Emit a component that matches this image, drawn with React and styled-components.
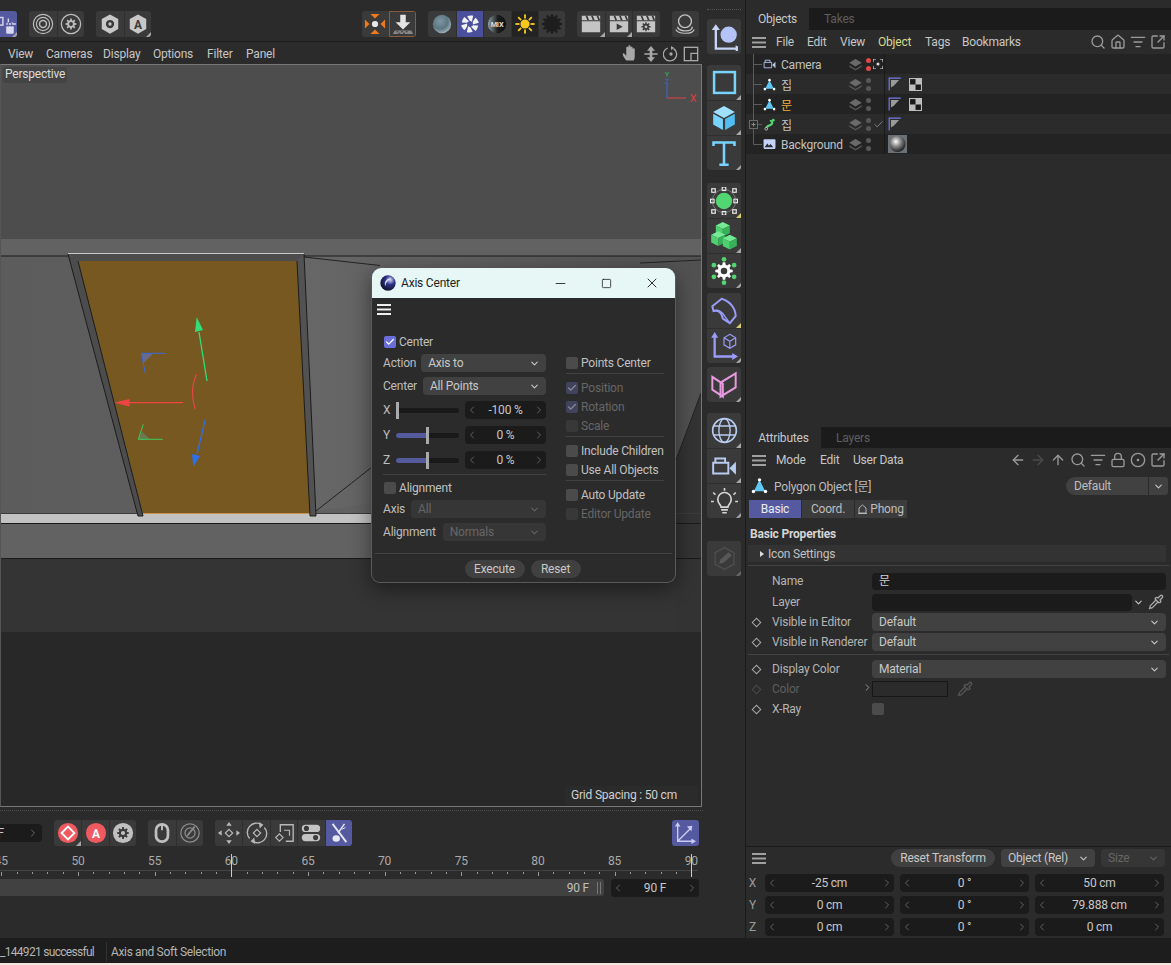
import React from "react";
import styled, { createGlobalStyle } from "styled-components";
import {
  Search,
  Home,
  ListFilter,
  SquareArrowOutUpRight,
  ArrowLeft,
  ArrowRight,
  ArrowUp,
  Lock,
  CircleDot,
  Pipette,
  X,
  Minus,
  Square,
  Check,
  ChevronDown,
  ChevronLeft,
  ChevronRight,
} from "lucide-react";

const GlobalStyle = createGlobalStyle`
  html, body {
    margin: 0;
    padding: 0;
    background: #2b2b2b;
    overflow: hidden;
  }
  * { box-sizing: border-box; }
  body {
    font-family: Roboto, "Noto Sans CJK KR", sans-serif;
    font-size: 12px;
    letter-spacing: -0.2px;
    color: #c6c6c6;
  }
`;

const Page = styled.div`
  width: 1171px;
  height: 965px;
  display: flex;
  flex-direction: column;
  overflow: hidden;
  background: #2b2b2b;
`;

const Main = styled.div`
  height: 938px;
  display: grid;
  grid-template-columns: 703px 42px 426px;
`;

const LeftColumn = styled.div`
  display: flex;
  flex-direction: column;
  min-width: 0;
  overflow: hidden;
`;

const Toolbar = styled.div`
  height: ${(p) => p.$height}px;
  padding: ${(p) => p.$top}px 4px 0 0;
  display: flex;
  align-items: flex-start;
  gap: 12px;
  flex-shrink: 0;
`;

const ToolSpacer = styled.div`
  flex: 1;
`;

const BtnGroup = styled.div`
  display: flex;
  border-radius: 3px;
  overflow: hidden;
  flex-shrink: 0;
  margin-left: ${(p) => p.$ml || 0}px;
`;

const ToolBtn = styled.div`
  position: relative;
  width: 27.4px;
  height: 26px;
  display: flex;
  align-items: center;
  justify-content: center;
  background: ${(p) => p.$bg || "#3a3a3a"};
  border-left: 1px solid #2f2f2f;
  outline: ${(p) => (p.$ring ? "1px solid #8a5a3a" : "none")};
  outline-offset: -1px;
  &:first-child { border-left: none; }
  &::after {
    content: "";
    display: ${(p) => (p.$corner ? "block" : "none")};
    position: absolute;
    right: 0;
    bottom: 0;
    border-style: solid;
    border-width: 0 0 5px 5px;
    border-color: transparent transparent #a8a8a8 transparent;
  }
`;

const ViewMenu = styled.div`
  height: 23px;
  display: flex;
  align-items: center;
  padding: 1px 4px 0 8px;
  border-top: 1px solid #1c1c1c;
  background: #2b2b2b;
`;

const MenuItem = styled.span`
  color: ${(p) => p.$color || "#c6c6c6"};
  width: ${(p) => p.$w}px;
  flex-shrink: 0;
  white-space: nowrap;
`;

const MenuIcons = styled.div`
  margin-left: auto;
  display: flex;
  align-items: center;
  gap: ${(p) => p.$gap || 5}px;
  color: ${(p) => p.$color || "#9a9a9a"};
`;

const Viewport = styled.div`
  position: relative;
  width: 702px;
  height: 743px;
  border: 1px solid #787878;
  border-left-color: #555;
  flex-shrink: 0;
`;

const Scene = styled.svg`
  display: block;
  width: 700px;
  height: 741px;
`;

const ViewLabel = styled.div`
  position: absolute;
  left: 2px;
  top: 2px;
  height: 16px;
  padding: 0 2px;
  line-height: 15px;
  border-radius: 2px;
  background: #444;
  color: #dcdcdc;
`;

const GridLabel = styled.div`
  position: absolute;
  right: 3px;
  bottom: 1px;
  width: 133px;
  height: 19px;
  line-height: 19px;
  padding-left: 6px;
  background: #2b2b2b;
  color: #d0d0d0;
`;

/* floating dialog */
const Dialog = styled.div`
  position: absolute;
  left: 370px;
  top: 203px;
  width: 305px;
  height: 315px;
  border: 1px solid #5a5a5a;
  border-top: none;
  border-radius: 9px;
  background: #2b2b2b;
  box-shadow: 0 6px 20px rgba(0, 0, 0, 0.45);
  display: flex;
  flex-direction: column;
`;

const TitleBar = styled.div`
  height: 30px;
  flex-shrink: 0;
  display: flex;
  align-items: center;
  padding-left: 8px;
  background: #e6f7f5;
  border-radius: 9px 9px 0 0;
  color: #1e1e1e;
`;

const TitleText = styled.span`
  margin-left: 5px;
  flex: 1;
`;

const WinButton = styled.div`
  width: 46px;
  height: 30px;
  display: flex;
  align-items: center;
  justify-content: center;
  color: #111;
`;

const DialogMenu = styled.div`
  height: 35px;
  padding: 6px 0 0 5px;
  flex-shrink: 0;
  color: #eee;
`;

const DialogBody = styled.div`
  height: 220px;
  padding-left: 11px;
  display: grid;
  grid-template-columns: 163px 98px;
  column-gap: 20px;
`;

const Col = styled.div`
  display: flex;
  flex-direction: column;
  padding-top: ${(p) => p.$top || 0}px;
`;

const FormRow = styled.div`
  height: 18px;
  display: flex;
  align-items: center;
  margin-top: ${(p) => p.$mt || 0}px;
  gap: ${(p) => p.$gap || 0}px;
`;

const FormLabel = styled.span`
  flex-shrink: 0;
  width: ${(p) => (p.$w ? `${p.$w}px` : "auto")};
  color: #bdbdbd;
`;

const Dropdown = styled.div`
  flex: 1;
  height: 18px;
  min-width: 0;
  padding: 0 6px 0 7px;
  border-radius: 4px;
  display: flex;
  align-items: center;
  justify-content: space-between;
  white-space: nowrap;
  background: ${(p) => (p.$off ? "#363636" : "#414141")};
  color: ${(p) => (p.$off ? "#666" : "#c8c8c8")};
`;

const Stepper = styled.div`
  flex: ${(p) => (p.$w ? "none" : 1)};
  width: ${(p) => (p.$w ? `${p.$w}px` : "auto")};
  height: 18px;
  border-radius: 4px;
  padding: 0 1px;
  display: flex;
  align-items: center;
  justify-content: space-between;
  background: #1b1b1b;
  color: #c8c8c8;
  svg { color: #777; flex-shrink: 0; }
`;

const Slider = styled.div`
  position: relative;
  width: 63px;
  height: 5px;
  margin: 0 6px 0 0;
  border-radius: 3px;
  background: #191919;
`;

const SliderFill = styled.div`
  height: 100%;
  width: ${(p) => p.$value}%;
  border-radius: 3px 0 0 3px;
  background: #555a9c;
`;

const SliderThumb = styled.div`
  position: absolute;
  top: -6px;
  left: ${(p) => p.$value}%;
  width: 3px;
  height: 17px;
  background: #aaa;
`;

const Divider = styled.div`
  height: 1px;
  flex-shrink: 0;
  margin: ${(p) => p.$mt || 0}px ${(p) => p.$mx || 0}px ${(p) => p.$mb || 0}px;
  background: ${(p) => p.$color || "#424242"};
`;

const CheckRow = styled.div`
  height: ${(p) => p.$h || 19}px;
  display: flex;
  align-items: center;
  gap: 3px;
  padding-left: ${(p) => p.$pl || 0}px;
  color: ${(p) => (p.$off ? "#666" : "#c0c0c0")};
`;

const CheckBox = styled.div`
  width: 12px;
  height: 12px;
  border-radius: 2px;
  display: flex;
  align-items: center;
  justify-content: center;
  flex-shrink: 0;
  background: ${(p) =>
    p.$on ? (p.$off ? "#41435c" : "#6a6ed8") : p.$off ? "#383838" : "#4b4b4b"};
  color: ${(p) => (p.$off ? "#8a8a9a" : "#fff")};
`;

const DialogFooter = styled.div`
  margin: 0 3px;
  padding: 6px 2px 0 0;
  border-top: 1px solid #424242;
  display: flex;
  justify-content: center;
  gap: 6px;
`;

const PillButton = styled.div`
  width: ${(p) => p.$w}px;
  height: 18px;
  line-height: 18px;
  text-align: center;
  border-radius: 9px;
  background: #404040;
  color: #c8c8c8;
  white-space: nowrap;
`;

/* timeline */
const DottedStrip = styled.div`
  height: 1px;
  margin: ${(p) => p.$top}px ${(p) => p.$x || 0}px 0;
  border-top: 1px dotted #4c4c4c;
  flex-shrink: 0;
`;

const FrameField = styled.div`
  width: 96px;
  height: 18px;
  margin: 4px 0 0 -54px;
  padding-right: 3px;
  border-radius: 4px;
  background: #1b1b1b;
  display: flex;
  align-items: center;
  justify-content: flex-end;
  gap: 23px;
  color: #c8c8c8;
  svg { color: #666; }
`;

const Ruler = styled.div`
  position: relative;
  height: 28px;
  margin-top: 4px;
  flex-shrink: 0;
`;

const RulerLabel = styled.span`
  position: absolute;
  top: 3px;
  transform: translateX(-50%);
  color: #aaa;
`;

const RulerTicks = styled.svg`
  position: absolute;
  left: 0;
  top: 0;
  width: 703px;
  height: 28px;
`;

const ScrubRow = styled.div`
  display: flex;
  gap: 7px;
  padding-right: 4px;
`;

const ScrubBar = styled.div`
  flex: 1;
  height: 17px;
  border-radius: 0 3px 3px 0;
  background: #414141;
  display: flex;
  align-items: center;
  justify-content: flex-end;
  padding-right: 3px;
  gap: 8px;
  color: #c0c0c0;
`;

const ScrubGrip = styled.div`
  width: 4px;
  height: 12px;
  border-left: 1px solid #777;
  border-right: 1px solid #777;
`;

/* command palette */
const Palette = styled.div`
  display: flex;
  flex-direction: column;
  padding-left: 4px;
`;

const PaletteGrip = styled.div`
  width: 34px;
  height: 1px;
  margin-top: 9px;
  border-top: 1px dotted #555;
`;

const PaletteGroup = styled.div`
  width: 34px;
  margin-top: ${(p) => p.$mt}px;
  border-radius: 3px;
  overflow: hidden;
  display: flex;
  flex-direction: column;
`;

const PaletteBtn = styled.div`
  position: relative;
  height: 35px;
  display: flex;
  align-items: center;
  justify-content: center;
  background: #3a3a3a;
  border-top: 1px solid #2f2f2f;
  &:first-child { border-top: none; }
  &::after {
    content: "";
    display: ${(p) => (p.$corner ? "block" : "none")};
    position: absolute;
    right: 0;
    bottom: 0;
    border-style: solid;
    border-width: 0 0 5px 5px;
    border-color: transparent transparent ${(p) => p.$corner} transparent;
  }
`;

/* right panels */
const RightColumn = styled.div`
  display: flex;
  flex-direction: column;
  border-left: 1px solid #1a1a1a;
  min-width: 0;
`;

const ObjectsPanel = styled.div`
  height: 417px;
  margin-top: 8px;
  flex-shrink: 0;
  display: flex;
  flex-direction: column;
`;

const AttributesPanel = styled.div`
  height: 421px;
  padding-top: 2px;
  flex-shrink: 0;
  display: flex;
  flex-direction: column;
`;

const CoordPanel = styled.div`
  flex: 1;
  border-top: 1px solid #1a1a1a;
  padding-top: 2px;
`;

const TabBar = styled.div`
  height: ${(p) => p.$h}px;
  display: flex;
  background: #1b1b1b;
  flex-shrink: 0;
`;

const Tab = styled.div`
  width: ${(p) => p.$w}px;
  line-height: 23px;
  text-align: ${(p) => (p.$active ? "center" : "left")};
  padding-left: ${(p) => (p.$active ? 0 : 15)}px;
  background: ${(p) => (p.$active ? "#2b2b2b" : "transparent")};
  color: ${(p) => (p.$active ? "#c8c8c8" : "#5e5e5e")};
`;

const PanelMenu = styled.div`
  height: 24px;
  padding: 0 5px 0 6px;
  display: flex;
  align-items: center;
  flex-shrink: 0;
  color: #b0b0b0;
`;

const MenuIconSlot = styled.span`
  margin-right: 10px;
  display: flex;
`;

const TreeRow = styled.div`
  height: 20px;
  display: grid;
  grid-template-columns: 139px 1fr;
  background: ${(p) => (p.$odd ? "#232323" : "#2b2b2b")};
`;

const TreeCell = styled.div`
  display: flex;
  align-items: center;
  padding-left: 1px;
  border-right: 1px solid #1a1a1a;
`;

const TreeIcon = styled.div`
  width: 13px;
  display: flex;
  justify-content: center;
  flex-shrink: 0;
`;

const TreeName = styled.span`
  margin-left: 5px;
  padding-top: ${(p) => p.$pt || 0}px;
  flex: 1;
  color: ${(p) => p.$color || "#c0c0c0"};
  white-space: nowrap;
`;

const TreeFlags = styled.div`
  display: flex;
  align-items: center;
  width: 36px;
  flex-shrink: 0;
  gap: 2px;
`;

const DotPair = styled.div`
  display: flex;
  flex-direction: column;
  gap: 3px;
  margin-left: 1px;
`;

const Dot = styled.div`
  width: 5px;
  height: 5px;
  border-radius: 50%;
  background: ${(p) => (p.$red ? "#e04848" : "#585858")};
`;

const TagCell = styled.div`
  display: flex;
  align-items: center;
  gap: 7px;
  padding-left: 3px;
`;

const ObjectHead = styled.div`
  height: 22px;
  margin-top: 2px;
  padding: 0 3px 0 5px;
  display: flex;
  align-items: center;
  gap: 6px;
  flex-shrink: 0;
  color: #bdbdbd;
`;

const SplitSelect = styled.div`
  margin: 2px 0 0 auto;
  width: 102px;
  height: 18px;
  display: grid;
  grid-template-columns: 1fr 19px;
  gap: 1px;
  border-radius: 9px 3px 3px 9px;
  overflow: hidden;
`;

const SplitPart = styled.div`
  background: #414141;
  padding-left: ${(p) => p.$pl || 0}px;
  line-height: 18px;
  display: flex;
  align-items: center;
  justify-content: ${(p) => (p.$pl ? "flex-start" : "center")};
`;

const AttrTabs = styled.div`
  display: flex;
  gap: 1px;
  margin: 4px 0 0 3px;
  flex-shrink: 0;
`;

const AttrTab = styled.div`
  width: 52px;
  height: 18px;
  display: flex;
  align-items: center;
  justify-content: center;
  gap: 3px;
  background: ${(p) => (p.$active ? "#5459a0" : "#3c3c3c")};
  color: ${(p) => (p.$active ? "#eee" : "#bdbdbd")};
`;

const SectionTitle = styled.div`
  height: 18px;
  margin-top: 7px;
  padding-left: 4px;
  line-height: 18px;
  font-weight: 700;
  color: #d4d4d4;
`;

const SectionBand = styled.div`
  height: 17px;
  margin: 2px 5px 0 2px;
  padding-left: 12px;
  display: flex;
  align-items: center;
  gap: 4px;
  background: #333;
  color: #c0c0c0;
`;

const Caret = styled.div`
  border-style: solid;
  border-width: 3.5px 0 3.5px 4px;
  border-color: transparent transparent transparent #ddd;
`;

const AttrRows = styled.div`
  display: flex;
  flex-direction: column;
  padding-top: 2px;
`;

const AttrRow = styled.div`
  height: 20px;
  margin-top: ${(p) => p.$mt || 0}px;
  padding-right: 5px;
  display: grid;
  grid-template-columns: 26px 100px 1fr;
  align-items: center;
  white-space: nowrap;
  color: ${(p) => (p.$off ? "#5e5e5e" : "#b4b4b4")};
`;

const Keyframe = styled.div`
  width: 7px;
  height: 7px;
  margin-left: 7px;
  transform: rotate(45deg);
  border: 1px solid ${(p) => (p.$off ? "#4a4a4a" : "#a8a8a8")};
`;

const DarkField = styled.div`
  height: ${(p) => p.$h || 17}px;
  border-radius: 4px;
  padding-left: 7px;
  line-height: 17px;
  background: #1b1b1b;
  color: #d0d0d0;
`;

const LayerControl = styled.div`
  display: grid;
  grid-template-columns: 1fr 14px 18px;
  align-items: center;
  gap: 1px;
  color: #aaa;
`;

const ColorControl = styled.div`
  position: relative;
  display: flex;
  align-items: center;
  gap: 9px;
  color: #555;
`;

const ColorArrow = styled.div`
  position: absolute;
  left: -10px;
  top: 1px;
  color: #999;
`;

const ColorSwatch = styled.div`
  width: 76px;
  height: 16px;
  background: #2b2b2b;
  border: 1px solid #171717;
`;

const CoordBar = styled.div`
  height: 18px;
  padding: 0 6px 0 6px;
  display: flex;
  align-items: center;
  color: #aaa;
`;

const CoordTools = styled.div`
  margin-left: auto;
  display: flex;
  gap: 6px;
`;

const FixedSelect = styled.div`
  width: ${(p) => p.$w}px;
  display: flex;
`;

const CoordGrid = styled.div`
  margin-top: 7px;
  display: flex;
  flex-direction: column;
  gap: 4px;
`;

const CoordRow = styled.div`
  display: grid;
  grid-template-columns: 13px repeat(3, 129px);
  column-gap: 6px;
  align-items: center;
  color: #9a9a9a;
  text-align: center;
`;

const StatusBar = styled.div`
  height: 25px;
  padding-top: 2px;
  flex-shrink: 0;
  display: flex;
  align-items: center;
  background: #1d1d1d;
  color: #b4b4b4;
`;

const StatusCell = styled.div`
  width: ${(p) => p.$w || "auto"};
  padding-left: ${(p) => p.$pl || 0}px;
  line-height: 20px;
  white-space: nowrap;
  letter-spacing: ${(p) => p.$ls || 0}px;
  border-right: ${(p) => (p.$split ? "1px solid #333" : "none")};
`;

const WindowEdge = styled.div`
  height: 2px;
  flex-shrink: 0;
  background: #efe7de;
`;

/* ---- drawn icons ---- */

const Svg = ({ s = 22, v = 24, children }) => (
  <svg width={s} height={s} viewBox={`0 0 ${v} ${v}`} fill="none">
    {children}
  </svg>
);

const gearPath = (cx, cy, r1, r2, n) => {
  let d = "";
  const step = (Math.PI * 2) / n;
  for (let i = 0; i < n; i++) {
    const a = i * step;
    const pts = [
      [r2, a - step * 0.18],
      [r2, a + step * 0.18],
      [r1, a + step * 0.32],
      [r1, a + step * 0.68],
    ];
    pts.forEach(([r, t], j) => {
      const x = (cx + Math.cos(t) * r).toFixed(2);
      const y = (cy + Math.sin(t) * r).toFixed(2);
      d += `${i === 0 && j === 0 ? "M" : "L"}${x} ${y} `;
    });
  }
  return d + "Z";
};

const Hamburger = ({ color = "#a0a0a0" }) => (
  <svg width="14" height="11" viewBox="0 0 14 11">
    <rect y="0" width="14" height="2" fill={color} />
    <rect y="4.5" width="14" height="2" fill={color} />
    <rect y="9" width="14" height="2" fill={color} />
  </svg>
);

const Chevron = ({ c = "#ccc" }) => <ChevronDown size={11} color={c} strokeWidth={2.2} />;

const HEX = "M12 1.5 21 6.5V17.5L12 22.5 3 17.5V6.5Z";

const SelectIcon = () => (
  <Svg s={26}>
    <rect x="1" y="6" width="10" height="7" stroke="#d8d8f0" strokeWidth="1.3" />
    <path d="M16 7v4h4M14 12h9" stroke="#d8d8f0" strokeWidth="1.3" />
    <rect x="14" y="14" width="7" height="7" rx="1" fill="#d8d8f0" />
    <path d="M16 14v-2a1.5 1.5 0 0 1 3 0v2" stroke="#5459a0" strokeWidth="1" />
  </Svg>
);

const Target = () => (
  <Svg>
    <circle cx="12" cy="12" r="10.5" stroke="#bcbcbc" strokeWidth="1.3" />
    <circle cx="12" cy="12" r="7.2" stroke="#bcbcbc" strokeWidth="1.3" />
    <circle cx="12" cy="12" r="3.8" stroke="#bcbcbc" strokeWidth="1.6" />
  </Svg>
);

const GearRing = () => (
  <Svg>
    <circle cx="12" cy="12" r="10.5" stroke="#bcbcbc" strokeWidth="1.4" />
    <path d={gearPath(12, 12, 4.2, 6, 8)} fill="#bcbcbc" />
    <circle cx="12" cy="12" r="2.1" fill="#3a3a3a" />
  </Svg>
);

const HexEye = () => (
  <Svg>
    <path d={HEX} fill="#c8c8c8" />
    <circle cx="12" cy="12" r="4.5" fill="#3a3a3a" />
    <circle cx="12" cy="12" r="1.8" fill="#c8c8c8" />
  </Svg>
);

const HexA = () => (
  <Svg>
    <path d={HEX} fill="#c8c8c8" />
    <text x="12" y="17" textAnchor="middle" fontSize="13" fontWeight="700" fontFamily="Roboto" fill="#3a3a3a">
      A
    </text>
  </Svg>
);

const SnapArrows = () => (
  <Svg>
    <circle cx="12" cy="12" r="3.4" fill="#e8e8e8" />
    <path
      d="M7 1h10l-5 5ZM7 23h10l-5-5ZM1 7v10l5-5ZM23 7v10l-5-5Z"
      fill="#f07a1a"
    />
  </Svg>
);

const DropArrow = () => (
  <Svg>
    <path d="M9 2h6v8h5l-8 8-8-8h5Z" fill="#e4e4e4" />
    <path d="M3 19h18l2 4H1Z" fill="#888" />
    <path d="M5 20h2v1H5ZM10 20h2v1h-2ZM15 20h2v1h-2ZM7 21.500h2v1H7ZM12 21.500h2v1h-2Z" fill="#333" />
  </Svg>
);

const GlassBall = () => (
  <Svg>
    <defs>
      <radialGradient id="ball" cx="40%" cy="35%" r="70%">
        <stop offset="0" stopColor="#7c98a4" />
        <stop offset="0.6" stopColor="#5d7682" />
        <stop offset="1" stopColor="#a8b8c0" />
      </radialGradient>
    </defs>
    <circle cx="12" cy="12" r="10" fill="url(#ball)" />
  </Svg>
);

const Shutter = () => (
  <Svg>
    {[0, 60, 120, 180, 240, 300].map((a) => (
      <path
        key={a}
        d="M9 3.500C11 2.500 13.500 2.500 15.500 3L14 9.500 11.500 8.200Z"
        fill="#f2f2f2"
        transform={`rotate(${a} 12 12)`}
      />
    ))}
  </Svg>
);

const MixBall = () => (
  <Svg>
    <defs>
      <linearGradient id="mix" x1="0" y1="0" x2="1" y2="0">
        <stop offset="0" stopColor="#8aa0a8" />
        <stop offset="0.55" stopColor="#1c1c1c" />
        <stop offset="1" stopColor="#111" />
      </linearGradient>
    </defs>
    <circle cx="12" cy="12" r="10" fill="url(#mix)" />
    <text x="12" y="15" textAnchor="middle" fontSize="8" fontWeight="700" fontFamily="Roboto" fill="#ddd">
      MIX
    </text>
  </Svg>
);

const Sun = () => (
  <Svg>
    <circle cx="12" cy="12" r="5" fill="#f6c81e" />
    {[0, 45, 90, 135, 180, 225, 270, 315].map((a) => (
      <rect key={a} x="11" y="1.500" width="2" height="4.500" fill="#f6c81e" transform={`rotate(${a} 12 12)`} />
    ))}
  </Svg>
);

const DarkGear = () => (
  <Svg>
    <path d={gearPath(12, 12, 8.5, 11, 12)} fill="#1e1e1e" />
  </Svg>
);

const Clapper = ({ mark }) => (
  <Svg>
    <path d="M2 3h20v5H2Z" fill="#c4c4c4" />
    <path d="M6 3h2l2 5H8ZM12 3h2l2 5h-2ZM18 3h2l2 5h-2Z" fill="#3a3a3a" />
    <path d="M2 9h20v12H2Z" fill="#c4c4c4" />
    {mark === "play" && <path d="M9.500 11.500 16 15l-6.500 3.500Z" fill="#3a3a3a" />}
    {mark === "gear" && (
      <>
        <path d={gearPath(12, 15, 3.4, 5, 8)} fill="#3a3a3a" />
        <circle cx="12" cy="15" r="1.500" fill="#c4c4c4" />
      </>
    )}
  </Svg>
);

const HeadRing = () => (
  <Svg>
    <circle cx="12" cy="9" r="7" stroke="#c0c0c0" strokeWidth="1.5" />
    <path d="M4 15c-.5 5 15.500 7 16 0" stroke="#c0c0c0" strokeWidth="1.5" />
    <path d="M2 18c2 5 18 6 20 0" stroke="#c0c0c0" strokeWidth="1.2" />
  </Svg>
);

const RedDiamond = () => (
  <Svg>
    <circle cx="12" cy="12" r="11" fill="#ee5a5f" />
    <path d="M12 5l7 7-7 7-7-7Z" stroke="#fff" strokeWidth="2" />
  </Svg>
);

const RedA = () => (
  <Svg>
    <circle cx="12" cy="12" r="11" fill="#ee5a5f" />
    <text x="12" y="17" textAnchor="middle" fontSize="13" fontWeight="700" fontFamily="Roboto" fill="#fff">
      A
    </text>
  </Svg>
);

const GrayGear = () => (
  <Svg>
    <circle cx="12" cy="12" r="11" fill="#c0c0c0" />
    <path d={gearPath(12, 12, 4.6, 6.500, 8)} fill="#3a3a3a" />
    <circle cx="12" cy="12" r="2.300" fill="#c0c0c0" />
  </Svg>
);

const MouseIcon = () => (
  <Svg>
    <rect x="4" y="1" width="16" height="22" rx="8" fill="#c0c0c0" />
    <rect x="7" y="4" width="10" height="16" rx="5" fill="#3a3a3a" />
    <rect x="11" y="3" width="2" height="6" fill="#c0c0c0" />
  </Svg>
);

const GaugeIcon = () => (
  <Svg>
    <circle cx="12" cy="12" r="10" stroke="#8a8a8a" strokeWidth="1.400" />
    <circle cx="12" cy="12" r="5.500" stroke="#8a8a8a" strokeWidth="1.400" />
    <path d="M9 15 17 5" stroke="#8a8a8a" strokeWidth="2" />
  </Svg>
);

const MoveKey = () => (
  <Svg>
    <path d="M12 8l4 4-4 4-4-4Z" stroke="#b8b8b8" strokeWidth="1.300" />
    <path d="M12 0l3 4H9ZM12 24l3-4H9ZM0 12l4-3v6ZM24 12l-4-3v6Z" fill="#b8b8b8" />
  </Svg>
);

const RotateKey = () => (
  <Svg>
    <path d="M12 8l4 4-4 4-4-4Z" stroke="#b8b8b8" strokeWidth="1.300" />
    <path d="M4 18A10 10 0 0 1 17 3M20 6A10 10 0 0 1 7 21" stroke="#b8b8b8" strokeWidth="1.500" />
    <path d="M14 0l5 3-4 4ZM10 24l-5-3 4-4Z" fill="#b8b8b8" />
  </Svg>
);

const ScaleKey = () => (
  <Svg>
    <path d="M8 11V3h14v18h-8" stroke="#b8b8b8" strokeWidth="1.500" />
    <path d="M7 13l4 4-4 4-4-4Z" stroke="#b8b8b8" strokeWidth="1.300" />
    <path d="M12 9h6v6" stroke="#b8b8b8" strokeWidth="1.300" />
  </Svg>
);

const Toggles = () => (
  <Svg>
    <rect x="2" y="3" width="20" height="8" rx="4" fill="#c4c4c4" />
    <circle cx="7" cy="7" r="2.800" fill="#3a3a3a" />
    <rect x="2" y="13" width="20" height="8" rx="4" fill="#c4c4c4" />
    <circle cx="17" cy="17" r="2.800" fill="#3a3a3a" />
  </Svg>
);

const CrossedKey = () => (
  <Svg>
    <path d="M5 2 20 22" stroke="#e8e8f4" strokeWidth="2" />
    <path d="M18 2 11 12" stroke="#e8e8f4" strokeWidth="1.500" />
    <ellipse cx="9" cy="18" rx="4" ry="3.500" fill="#e8e8f4" />
    <path d="M15 8l4-2" stroke="#e8e8f4" strokeWidth="1" />
  </Svg>
);

const BlueAxes = () => (
  <Svg>
    <path d="M4 3v18h18M4 21 18 7" stroke="#c8ccf0" strokeWidth="1.500" />
    <path d="M4 0l3 5H1ZM24 21l-5-3v6ZM20 4l-1 6-5-5Z" fill="#c8ccf0" />
  </Svg>
);

/* palette icons */
const AxisBall = () => (
  <Svg s={28}>
    <path d="M5 4v18h19" stroke="#c8d4f8" strokeWidth="2" />
    <path d="M5 1 1.500 6h7ZM27 22l-5-3v6Z" fill="#c8d4f8" />
    <circle cx="16" cy="10" r="7" fill="#b4c4f8" />
  </Svg>
);

const RectIcon = () => (
  <Svg s={25}>
    <rect x="2" y="2" width="20" height="20" stroke="#76d4ff" strokeWidth="2.400" />
  </Svg>
);

const CubeIcon = () => (
  <Svg s={26}>
    <path d="M12 1 22 6.500 12 12 2 6.500Z" fill="#9fe0ff" />
    <path d="M2 8 11 13v10L2 18Z" fill="#76d4ff" />
    <path d="M22 8 13 13v10l9-5Z" fill="#52bdf0" />
  </Svg>
);

const TextIcon = () => (
  <Svg s={28}>
    <path d="M3 6V3h18v3M12 3v19M8 22h8" stroke="#76d4ff" strokeWidth="2.200" />
  </Svg>
);

const SubdivIcon = () => (
  <Svg s={28}>
    <circle cx="12" cy="12" r="7" fill="#52d672" />
    {[[3, 3], [12, 1.500], [21, 3], [2, 12], [22, 12], [3, 21], [12, 22.500], [21, 21]].map(([x, y]) => (
      <rect key={`${x}-${y}`} x={x - 1.500} y={y - 1.500} width="3" height="3" stroke="#eee" strokeWidth="1" />
    ))}
    <circle cx="12" cy="12" r="10" stroke="#aaa" strokeWidth="0.500" />
  </Svg>
);

const IsoCube = ({ x, y, r }) => (
  <>
    <path d={`M${x} ${y - r}l${r} ${r / 2}-${r} ${r / 2}-${r}-${r / 2}Z`} fill="#74ea94" />
    <path d={`M${x - r} ${y - r / 2}l${r} ${r / 2}v${r * 1.1}l-${r}-${r / 2}Z`} fill="#4fd070" />
    <path d={`M${x + r} ${y - r / 2}l-${r} ${r / 2}v${r * 1.1}l${r}-${r / 2}Z`} fill="#38b058" />
  </>
);

const GreenCubes = () => (
  <Svg s={28}>
    <IsoCube x={11} y={6} r={6} />
    <IsoCube x={7} y={14} r={6} />
    <IsoCube x={17} y={17} r={6} />
  </Svg>
);

const GearDots = () => (
  <Svg s={28}>
    <path d={gearPath(12, 12, 5.500, 7.500, 8)} fill="#fff" />
    <circle cx="12" cy="12" r="2.800" fill="#3a3a3a" />
    {[0, 60, 120, 180, 240, 300].map((a) => (
      <circle
        key={a}
        cx={12 + Math.sin((a * Math.PI) / 180) * 10}
        cy={12 - Math.cos((a * Math.PI) / 180) * 10}
        r="2"
        fill="#52d672"
      />
    ))}
  </Svg>
);

const BendIcon = () => (
  <Svg s={28}>
    <path d="M2 8 10 1.500c7 2 12 8 12 15l-5 6-6-4C10 13 7 11 3 12Z" stroke="#9a9cf8" strokeWidth="1.700" />
    <path d="M3 12c4-2 8 1 10 5l4 5.500" stroke="#9a9cf8" strokeWidth="1.200" />
  </Svg>
);

const AxisCube = () => (
  <Svg s={28}>
    <path d="M4 3v18h18" stroke="#9a9cf8" strokeWidth="2" />
    <path d="M4 0 1 5h6ZM24 21l-5-3v6Z" fill="#9a9cf8" />
    <path d="M17 2l5 3v6l-5 3-5-3V5ZM12 5l5 3 5-3M17 8v6" stroke="#9a9cf8" strokeWidth="1" />
  </Svg>
);

const WingIcon = () => (
  <Svg s={28}>
    <path d="M2 5l9 6v11l-9-6ZM22 2l-13 8v12l13-8Z" stroke="#e89ae0" strokeWidth="1.700" />
  </Svg>
);

const GlobeIcon = () => (
  <Svg s={27}>
    <circle cx="12" cy="12" r="10.500" stroke="#b8ccf0" strokeWidth="1.500" />
    <ellipse cx="12" cy="12" rx="5" ry="10.500" stroke="#b8ccf0" strokeWidth="1.200" />
    <path d="M2 8h20M2 16h20" stroke="#b8ccf0" strokeWidth="1.200" />
  </Svg>
);

const CameraIcon = ({ s = 26, w = 1.800 }) => (
  <Svg s={s}>
    <path d="M2 9h14v10H2ZM4 9V5h9v4" stroke="#b8ccf0" strokeWidth={w} />
    <path d="M23 8v12l-6-6Z" fill="#b8ccf0" />
  </Svg>
);

const BulbIcon = () => (
  <Svg s={27}>
    <path d="M9 17c0-2-3-3-3-7a6 6 0 0 1 12 0c0 4-3 5-3 7ZM9 19.500h6M10 22h4" stroke="#d4d4d4" strokeWidth="1.500" />
    <path d="M12 0v2.500M2 4l2 2M22 4l-2 2M0 12h2.500M24 12h-2.500" stroke="#d4d4d4" strokeWidth="1.500" />
  </Svg>
);

const PencilHex = () => (
  <Svg s={25}>
    <path d={HEX} stroke="#4e4e4e" strokeWidth="1.300" />
    <path d="M7 17l1-4 8-7 3 3-8 7Z" fill="#585858" />
  </Svg>
);

/* object manager icons */
const PolyIcon = ({ s = 15 }) => (
  <Svg s={s}>
    <path d="M12 4 20 20H4Z" fill="#5fc8f4" />
    <circle cx="12" cy="4" r="2.400" fill="#fff" />
    <circle cx="3.500" cy="20.500" r="2.400" fill="#fff" />
    <circle cx="20.500" cy="20.500" r="2.400" fill="#fff" />
  </Svg>
);

const SplineIcon = () => (
  <Svg s={15}>
    <path d="M6 19c0-5 11-5 11-10 0-3-2-4-4-3" stroke="#52d672" strokeWidth="4" />
    <circle cx="6" cy="20" r="2.500" fill="#2b2b2b" stroke="#ddd" strokeWidth="1.300" />
    <circle cx="19" cy="4" r="2.500" fill="#52d672" />
  </Svg>
);

const PictureIcon = () => (
  <Svg s={14}>
    <rect x="1" y="3" width="22" height="18" rx="2" fill="#c4d4f8" />
    <path d="M3 18l5-7 3 4 3-3 5 6Z" fill="#2b2b2b" />
  </Svg>
);

const LayerStack = () => (
  <Svg s={15}>
    <path d="M12 3 22 9l-10 6L2 9Z" fill="#6a6a6a" />
    <path d="M2 13l10 6 10-6v2.500l-10 6-10-6Z" fill="#5a5a5a" />
  </Svg>
);

const Connector = ({ last, plus }) => (
  <svg width="16" height="20" viewBox="0 0 16 20" style={{ flexShrink: 0 }}>
    <path d={`M6.500 0V${last ? 10.500 : 20}M6.500 10.500H15`} stroke="#5c5c5c" fill="none" />
    {plus && (
      <>
        <rect x="2.500" y="6.500" width="8" height="8" fill="#2b2b2b" stroke="#6a6a6a" />
        <path d="M4.500 10.500h4M6.500 8.500v4" stroke="#888" />
      </>
    )}
  </svg>
);

const FlagTag = () => (
  <Svg s={14}>
    <path d="M2 23V2h20" stroke="#7b7be8" strokeWidth="2" />
    <path d="M5 5h14L10 15l-5 3Z" fill="#9a9a9a" />
  </Svg>
);

const CheckerTag = () => (
  <svg width="13" height="13" viewBox="0 0 12 12">
    <rect width="12" height="12" fill="#bdbdbd" />
    <rect x="1" y="1" width="5" height="5" fill="#1a1a1a" />
    <rect x="6" y="6" width="5" height="5" fill="#1a1a1a" />
  </svg>
);

const MaterialTag = () => (
  <svg width="19" height="18" viewBox="0 0 19 18">
    <defs>
      <radialGradient id="mat" cx="40%" cy="35%" r="65%">
        <stop offset="0" stopColor="#fff" />
        <stop offset="0.45" stopColor="#8c8c8c" />
        <stop offset="1" stopColor="#222" />
      </radialGradient>
    </defs>
    <rect width="19" height="18" fill="#6a7278" />
    <circle cx="9.500" cy="9" r="8" fill="url(#mat)" />
  </svg>
);

const FocusMark = () => (
  <svg width="10" height="10" viewBox="0 0 10 10">
    <path d="M0 3V0h3M7 0h3v3M10 7v3H7M3 10H0V7" stroke="#ddd" fill="none" strokeWidth="1.200" />
    <circle cx="5" cy="5" r="1.500" fill="#ddd" />
  </svg>
);

const HandIcon = () => (
  <Svg s={17}>
    <path
      d="M6 22c-2-3-5-7-5-9s2-2 3 0l2 2V4c0-2 3-2 3 0V2c0-2 3-2 3 0v2c0-2 3-2 3 0v2c0-2 3-2 3 0v10c0 3-1 6-2 6Z"
      fill="#a8a8a8"
    />
  </Svg>
);

const VMove = () => (
  <Svg s={16}>
    <path d="M12 0l6 7h-4v4h8v2h-8v4h4l-6 7-6-7h4v-4H2v-2h8V7H6Z" fill="#a8a8a8" />
  </Svg>
);

const OrbitIcon = () => (
  <Svg s={16}>
    <path d="M16 4A10 10 0 1 1 7 3" stroke="#a8a8a8" strokeWidth="2" />
    <path d="M12 0v6l5-3Z" fill="#a8a8a8" />
    <circle cx="12" cy="12" r="2.500" fill="#a8a8a8" />
  </Svg>
);

const PanelsIcon = () => (
  <Svg s={16}>
    <rect x="2" y="2" width="20" height="20" stroke="#a8a8a8" strokeWidth="2" />
    <path d="M12 22V11h10" stroke="#a8a8a8" strokeWidth="2" />
  </Svg>
);

const C4dLogo = () => (
  <svg width="16" height="16" viewBox="0 0 24 24">
    <defs>
      <radialGradient id="c4d" cx="65%" cy="30%" r="80%">
        <stop offset="0" stopColor="#cfd4ff" />
        <stop offset="0.4" stopColor="#2a2f80" />
        <stop offset="1" stopColor="#0c0c20" />
      </radialGradient>
    </defs>
    <circle cx="12" cy="12" r="11.500" fill="url(#c4d)" />
    <path d="M17 5c-6-1-12 5-9 12 1-6 4-9 9-12Z" fill="#fff" opacity="0.75" />
  </svg>
);

const HouseTab = () => (
  <svg width="9" height="10" viewBox="0 0 9 10" fill="none">
    <path d="M1 9V4l3.500-3L8 4v5ZM0 9.500h9" stroke="#bdbdbd" strokeWidth="0.900" />
  </svg>
);

/* ---- data ---- */

const PALETTE = [
  { mt: 9, items: [[AxisBall]] },
  { mt: 11, items: [[RectIcon, "#a8a8a8"], [CubeIcon, "#a8a8a8"], [TextIcon, "#a8a8a8"]] },
  { mt: 13, items: [[SubdivIcon, "#d8d070"], [GreenCubes, "#a8a8a8"], [GearDots, "#a8a8a8"]] },
  { mt: 5, items: [[BendIcon, "#d8d070"], [AxisCube, "#a8a8a8"]] },
  { mt: 4, items: [[WingIcon, "#a8a8a8"]] },
  { mt: 11, items: [[GlobeIcon, "#a8a8a8"], [CameraIcon, "#a8a8a8"], [BulbIcon, "#a8a8a8"]] },
  { mt: 23, items: [[PencilHex, "#6a6a6a"]] },
];

const TREE = [
  { name: "Camera", pt: 2, icon: <CameraIcon s={14} w={1.600} />, dots: [true, true], extra: <FocusMark /> },
  { name: "집", icon: <PolyIcon />, tags: [<FlagTag key="f" />, <CheckerTag key="c" />] },
  { name: "문", color: "#f0b23c", icon: <PolyIcon />, tags: [<FlagTag key="f" />, <CheckerTag key="c" />] },
  { name: "집", icon: <SplineIcon />, plus: true, extra: <Check size={11} color="#888" />, tags: [<FlagTag key="f" />] },
  { name: "Background", pt: 2, icon: <PictureIcon />, last: true, tags: [<MaterialTag key="m" />] },
];

const COORDS = [
  ["X", "-25 cm", "0 °", "50 cm"],
  ["Y", "0 cm", "0 °", "79.888 cm"],
  ["Z", "0 cm", "0 °", "0 cm"],
];

const frameX = (f) => 78 + (f - 50) * 15.33;
const FRAMES = Array.from({ length: 50 }, (_, i) => 45 + i);
const LABELS = [45, 50, 55, 60, 65, 70, 75, 80, 85, 90];

/* ---- small composed parts ---- */

const Value = ({ children, w }) => (
  <Stepper $w={w}>
    <ChevronLeft size={12} strokeWidth={1.500} />
    <span>{children}</span>
    <ChevronRight size={12} strokeWidth={1.500} />
  </Stepper>
);

const Select = ({ children, off }) => (
  <Dropdown $off={off}>
    {children}
    <Chevron c={off ? "#666" : "#ccc"} />
  </Dropdown>
);

const Option = ({ label, on, off }) => (
  <CheckRow $off={off}>
    <CheckBox $on={on} $off={off}>
      {on && <Check size={10} strokeWidth={3} />}
    </CheckBox>
    {label}
  </CheckRow>
);

const SliderRow = ({ label, value, pct, mt }) => (
  <FormRow $mt={mt}>
    <FormLabel $w={13}>{label}</FormLabel>
    <Slider>
      <SliderFill $value={pct} />
      <SliderThumb $value={pct} />
    </Slider>
    <Value>{value}</Value>
  </FormRow>
);

const SceneDrawing = () => (
  <Scene viewBox="1 65 700 741">
    <defs>
      <linearGradient id="wallL" x1="0" y1="0" x2="1" y2="0">
        <stop offset="0" stopColor="#5c5c5c" />
        <stop offset="1" stopColor="#666" />
      </linearGradient>
      <linearGradient id="wallR" x1="0" y1="0" x2="1" y2="0">
        <stop offset="0" stopColor="#676767" />
        <stop offset="1" stopColor="#515151" />
      </linearGradient>
    </defs>
    <rect x="1" y="65" width="700" height="174" fill="#4d4d4d" />
    <rect x="1" y="239" width="700" height="17" fill="#626262" />
    <rect x="1" y="256" width="700" height="258" fill="url(#wallL)" />
    <path d="M304 256 701 256V393L676 460 316 511Z" fill="url(#wallR)" />
    <rect x="1" y="514" width="700" height="9" fill="#c2c2c2" />
    <rect x="1" y="524" width="700" height="34" fill="#626262" />
    <rect x="1" y="559" width="700" height="73" fill="#343434" />
    <rect x="1" y="632" width="700" height="175" fill="#282828" />
    <path d="M676 460 701 393V632H676Z" fill="#333" />
    <path d="M1 256H68M304 256H701M1 523.500H701M1 558.500H701" stroke="#1a1a1a" strokeWidth="1" />
    <path d="M1 513.500H143M316 513.500H701" stroke="#3c3c3c" strokeWidth="1" />
    <path d="M304 257 380 265.500M640 263 701 260M316 511 372 467M676 460 701 393" stroke="#222" fill="none" strokeWidth="1" />

    {/* door */}
    <path d="M78 261H297L310 513H143Z" fill="#775821" />
    <path d="M143 513.500H310" stroke="#c8914c" strokeWidth="1.200" />
    <path d="M68 254H304L297 261H78Z" fill="#4c4c4c" />
    <path d="M68 254 78 261 143 516H138Z" fill="#4c4c4c" />
    <path d="M304 254 297 261 310 516H316Z" fill="#525252" />
    <path d="M68 253.500H304" stroke="#c8c8c8" strokeWidth="1.200" />
    <path d="M68 254 138 516H143L78 261M304 254 316 516H310L297 261" stroke="#1c1c1c" fill="none" strokeWidth="1" />

    {/* gizmo */}
    <path d="M207 381 199 332" stroke="#2fe07a" strokeWidth="1.300" />
    <path d="M196.700 317 195 332 203 330Z" fill="#2fe07a" />
    <path d="M183 402.700H129" stroke="#ee4444" strokeWidth="1.300" />
    <path d="M114 402.700 129.500 399V406.500Z" fill="#ee4444" />
    <path d="M205.300 419.300 197 454" stroke="#2c6fe8" strokeWidth="1.300" />
    <path d="M193.300 467 192 454 200 456Z" fill="#2c6fe8" />
    <path d="M196.700 374Q189 390 195.300 409.300" stroke="#e04444" strokeWidth="1.200" fill="none" />
    <path d="M141.300 353.300H153.300L143.300 363.300Z" fill="#6a6a8a" />
    <path d="M165.700 353.300H141.300L145.300 373.300" stroke="#3a6ad8" strokeWidth="1" fill="none" />
    <path d="M138.300 439.300H150L142 431.700Z" fill="#6a7a50" />
    <path d="M162.700 439.300H138.300L143.300 424.300" stroke="#3ecc5a" strokeWidth="1" fill="none" />

    {/* world axis */}
    <path d="M667 98H686" stroke="#e04444" strokeWidth="1" />
    <path d="M667 98V84" stroke="#3a6ad8" strokeWidth="1" />
    <text x="693" y="102" textAnchor="middle" fontSize="11" fontFamily="Roboto" fill="#d84040">X</text>
    <text x="667" y="77" textAnchor="middle" fontSize="7" fontFamily="Roboto" fill="#30b860">Y</text>
    <text x="667" y="84" textAnchor="middle" fontSize="7" fontFamily="Roboto" fill="#3a6ad8">Z</text>
  </Scene>
);

export default function App() {
  return (
    <Page>
      <GlobalStyle />
      <Main>
        <LeftColumn>
          <Toolbar $height={41} $top={11}>
            <BtnGroup $ml={-10}>
              <ToolBtn $bg="#5459a0" $corner>
                <SelectIcon />
              </ToolBtn>
            </BtnGroup>
            <BtnGroup>
              <ToolBtn><Target /></ToolBtn>
              <ToolBtn><GearRing /></ToolBtn>
            </BtnGroup>
            <BtnGroup>
              <ToolBtn><HexEye /></ToolBtn>
              <ToolBtn $corner><HexA /></ToolBtn>
            </BtnGroup>
            <ToolSpacer />
            <BtnGroup>
              <ToolBtn><SnapArrows /></ToolBtn>
              <ToolBtn $ring><DropArrow /></ToolBtn>
            </BtnGroup>
            <BtnGroup>
              <ToolBtn><GlassBall /></ToolBtn>
              <ToolBtn $bg="#4a4f9c"><Shutter /></ToolBtn>
              <ToolBtn><MixBall /></ToolBtn>
              <ToolBtn $bg="#232323"><Sun /></ToolBtn>
              <ToolBtn><DarkGear /></ToolBtn>
            </BtnGroup>
            <BtnGroup>
              <ToolBtn $corner><Clapper /></ToolBtn>
              <ToolBtn $corner><Clapper mark="play" /></ToolBtn>
              <ToolBtn><Clapper mark="gear" /></ToolBtn>
            </BtnGroup>
            <BtnGroup>
              <ToolBtn><HeadRing /></ToolBtn>
            </BtnGroup>
          </Toolbar>

          <ViewMenu>
            <MenuItem $w={38}>View</MenuItem>
            <MenuItem $w={57}>Cameras</MenuItem>
            <MenuItem $w={50}>Display</MenuItem>
            <MenuItem $w={54}>Options</MenuItem>
            <MenuItem $w={39}>Filter</MenuItem>
            <MenuItem $w={30}>Panel</MenuItem>
            <MenuIcons $gap={4}>
              <HandIcon />
              <VMove />
              <OrbitIcon />
              <PanelsIcon />
            </MenuIcons>
          </ViewMenu>

          <Viewport>
            <SceneDrawing />
            <ViewLabel>Perspective</ViewLabel>
            <GridLabel>Grid Spacing : 50 cm</GridLabel>

            <Dialog>
              <TitleBar>
                <C4dLogo />
                <TitleText>Axis Center</TitleText>
                <WinButton><Minus size={15} strokeWidth={1.300} /></WinButton>
                <WinButton><Square size={11} strokeWidth={1.600} /></WinButton>
                <WinButton><X size={16} strokeWidth={1.300} /></WinButton>
              </TitleBar>
              <DialogMenu>
                <Hamburger color="#eee" />
              </DialogMenu>
              <DialogBody>
                <Col>
                  <CheckRow $pl={1} $h={18}>
                    <CheckBox $on><Check size={10} strokeWidth={3} /></CheckBox>
                    Center
                  </CheckRow>
                  <FormRow $mt={3} $gap={5}>
                    <FormLabel>Action</FormLabel>
                    <Select>Axis to</Select>
                  </FormRow>
                  <FormRow $mt={5} $gap={6}>
                    <FormLabel>Center</FormLabel>
                    <Select>All Points</Select>
                  </FormRow>
                  <SliderRow label="X" value="-100 %" pct={0} mt={6} />
                  <SliderRow label="Y" value="0 %" pct={47} mt={7} />
                  <SliderRow label="Z" value="0 %" pct={47} mt={7} />
                  <Divider $mt={5} $mb={4} />
                  <CheckRow $pl={1} $h={18}>
                    <CheckBox />
                    Alignment
                  </CheckRow>
                  <FormRow $mt={3} $gap={6}>
                    <FormLabel>Axis</FormLabel>
                    <Select off>All</Select>
                  </FormRow>
                  <FormRow $mt={5} $gap={7}>
                    <FormLabel>Alignment</FormLabel>
                    <Select off>Normals</Select>
                  </FormRow>
                </Col>
                <Col $top={20}>
                  <Option label="Points Center" />
                  <Divider $mt={1} $mb={4} />
                  <Option label="Position" on off />
                  <Option label="Rotation" on off />
                  <Option label="Scale" off />
                  <Divider $mt={1} $mb={4} />
                  <Option label="Include Children" />
                  <Option label="Use All Objects" />
                  <Divider $mt={1} $mb={4} />
                  <Option label="Auto Update" />
                  <Option label="Editor Update" off />
                </Col>
              </DialogBody>
              <DialogFooter>
                <PillButton $w={60}>Execute</PillButton>
                <PillButton $w={50}>Reset</PillButton>
              </DialogFooter>
            </Dialog>
          </Viewport>

          <DottedStrip $top={3} />
          <Toolbar $height={36} $top={9}>
            <FrameField>
              F
              <ChevronRight size={12} />
            </FrameField>
            <BtnGroup>
              <ToolBtn $corner><RedDiamond /></ToolBtn>
              <ToolBtn><RedA /></ToolBtn>
              <ToolBtn><GrayGear /></ToolBtn>
            </BtnGroup>
            <BtnGroup>
              <ToolBtn><MouseIcon /></ToolBtn>
              <ToolBtn><GaugeIcon /></ToolBtn>
            </BtnGroup>
            <BtnGroup>
              <ToolBtn><MoveKey /></ToolBtn>
              <ToolBtn><RotateKey /></ToolBtn>
              <ToolBtn><ScaleKey /></ToolBtn>
              <ToolBtn><Toggles /></ToolBtn>
              <ToolBtn $bg="#5459a0"><CrossedKey /></ToolBtn>
            </BtnGroup>
            <ToolSpacer />
            <BtnGroup>
              <ToolBtn $bg="#5459a0"><BlueAxes /></ToolBtn>
            </BtnGroup>
          </Toolbar>

          <Ruler>
            {LABELS.map((f) => (
              <RulerLabel key={f} style={{ left: frameX(f) }}>
                {f}
              </RulerLabel>
            ))}
            <RulerTicks viewBox="0 0 703 28">
              <path d="M0 19.500H698" stroke="#444" />
              {FRAMES.map((f) => (
                <path
                  key={f}
                  d={`M${Math.round(frameX(f)) + 0.5} 21V${f % 5 === 0 ? 25 : 23}`}
                  stroke="#999"
                />
              ))}
              <path d={`M${Math.round(frameX(60)) + 0.5} 3V26`} stroke="#ccc" />
              <path d={`M${Math.round(frameX(90)) + 0.5} 3V26`} stroke="#ccc" />
            </RulerTicks>
          </Ruler>

          <ScrubRow>
            <ScrubBar>
              90 F
              <ScrubGrip />
            </ScrubBar>
            <Value w={88}>90 F</Value>
          </ScrubRow>
        </LeftColumn>

        <Palette>
          <PaletteGrip />
          {PALETTE.map((group, g) => (
            <PaletteGroup key={g} $mt={group.mt}>
              {group.items.map(([Icon, corner], i) => (
                <PaletteBtn key={i} $corner={corner}>
                  <Icon />
                </PaletteBtn>
              ))}
            </PaletteGroup>
          ))}
        </Palette>

        <RightColumn>
          <ObjectsPanel>
            <TabBar $h={22}>
              <Tab $w={63} $active>Objects</Tab>
              <Tab $w={70}>Takes</Tab>
            </TabBar>
            <PanelMenu>
              <MenuIconSlot><Hamburger /></MenuIconSlot>
              <MenuItem $w={31}>File</MenuItem>
              <MenuItem $w={33}>Edit</MenuItem>
              <MenuItem $w={38}>View</MenuItem>
              <MenuItem $w={47} $color="#d9d98c">Object</MenuItem>
              <MenuItem $w={37}>Tags</MenuItem>
              <MenuItem $w={60}>Bookmarks</MenuItem>
              <MenuIcons $gap={4}>
                <Search size={16} />
                <Home size={16} />
                <ListFilter size={16} />
                <SquareArrowOutUpRight size={16} />
              </MenuIcons>
            </PanelMenu>
            {TREE.map((row, i) => (
              <TreeRow key={i} $odd={i % 2 === 0}>
                <TreeCell>
                  <Connector last={row.last} plus={row.plus} />
                  <TreeIcon>{row.icon}</TreeIcon>
                  <TreeName $color={row.color} $pt={row.pt}>{row.name}</TreeName>
                  <TreeFlags>
                    <LayerStack />
                    <DotPair>
                      <Dot $red={row.dots} />
                      <Dot $red={row.dots} />
                    </DotPair>
                    {row.extra}
                  </TreeFlags>
                </TreeCell>
                <TagCell>{row.tags}</TagCell>
              </TreeRow>
            ))}
          </ObjectsPanel>

          <AttributesPanel>
            <TabBar $h={21}>
              <Tab $w={75} $active>Attributes</Tab>
              <Tab $w={70}>Layers</Tab>
            </TabBar>
            <PanelMenu>
              <MenuIconSlot><Hamburger /></MenuIconSlot>
              <MenuItem $w={44}>Mode</MenuItem>
              <MenuItem $w={33}>Edit</MenuItem>
              <MenuItem $w={60}>User Data</MenuItem>
              <MenuIcons $gap={4}>
                <ArrowLeft size={16} />
                <ArrowRight size={16} color="#4c4c4c" />
                <ArrowUp size={16} />
                <Search size={16} />
                <ListFilter size={16} />
                <Lock size={16} />
                <CircleDot size={16} />
                <SquareArrowOutUpRight size={16} />
              </MenuIcons>
            </PanelMenu>
            <ObjectHead>
              <PolyIcon s={17} />
              Polygon Object [문]
              <SplitSelect>
                <SplitPart $pl={8}>Default</SplitPart>
                <SplitPart><Chevron /></SplitPart>
              </SplitSelect>
            </ObjectHead>
            <AttrTabs>
              <AttrTab $active>Basic</AttrTab>
              <AttrTab>Coord.</AttrTab>
              <AttrTab><HouseTab /> Phong</AttrTab>
            </AttrTabs>
            <SectionTitle>Basic Properties</SectionTitle>
            <SectionBand>
              <Caret />
              Icon Settings
            </SectionBand>
            <Divider $mt={3} $mb={3} $mx={2} />
            <AttrRows>
              <AttrRow>
                <span />
                <span>Name</span>
                <DarkField>문</DarkField>
              </AttrRow>
              <AttrRow $mt={1}>
                <span />
                <span>Layer</span>
                <LayerControl>
                  <DarkField />
                  <Chevron />
                  <Pipette size={16} />
                </LayerControl>
              </AttrRow>
              <AttrRow>
                <Keyframe />
                <span>Visible in Editor</span>
                <Select>Default</Select>
              </AttrRow>
              <AttrRow>
                <Keyframe />
                <span>Visible in Renderer</span>
                <Select>Default</Select>
              </AttrRow>
              <Divider $mt={2} $mb={2} $mx={2} />
              <AttrRow $mt={2}>
                <Keyframe />
                <span>Display Color</span>
                <Select>Material</Select>
              </AttrRow>
              <AttrRow $off>
                <Keyframe $off />
                <span>Color</span>
                <ColorControl>
                  <ColorArrow><ChevronRight size={11} /></ColorArrow>
                  <ColorSwatch />
                  <Pipette size={16} />
                </ColorControl>
              </AttrRow>
              <AttrRow>
                <Keyframe />
                <span>X-Ray</span>
                <CheckBox />
              </AttrRow>
            </AttrRows>
          </AttributesPanel>

          <CoordPanel>
            <CoordBar>
              <Hamburger />
              <CoordTools>
                <PillButton $w={104}>Reset Transform</PillButton>
                <FixedSelect $w={94}><Select>Object (Rel)</Select></FixedSelect>
                <FixedSelect $w={64}><Select off>Size</Select></FixedSelect>
              </CoordTools>
            </CoordBar>
            <CoordGrid>
              {COORDS.map(([axis, a, b, c]) => (
                <CoordRow key={axis}>
                  <span>{axis}</span>
                  <Value>{a}</Value>
                  <Value>{b}</Value>
                  <Value>{c}</Value>
                </CoordRow>
              ))}
            </CoordGrid>
          </CoordPanel>
        </RightColumn>
      </Main>

      <StatusBar>
        <StatusCell $w="107px" $ls={-0.7} $split>_144921 successful</StatusCell>
        <StatusCell $pl={4} $ls={-0.35}>Axis and Soft Selection</StatusCell>
      </StatusBar>
      <WindowEdge />
    </Page>
  );
}
